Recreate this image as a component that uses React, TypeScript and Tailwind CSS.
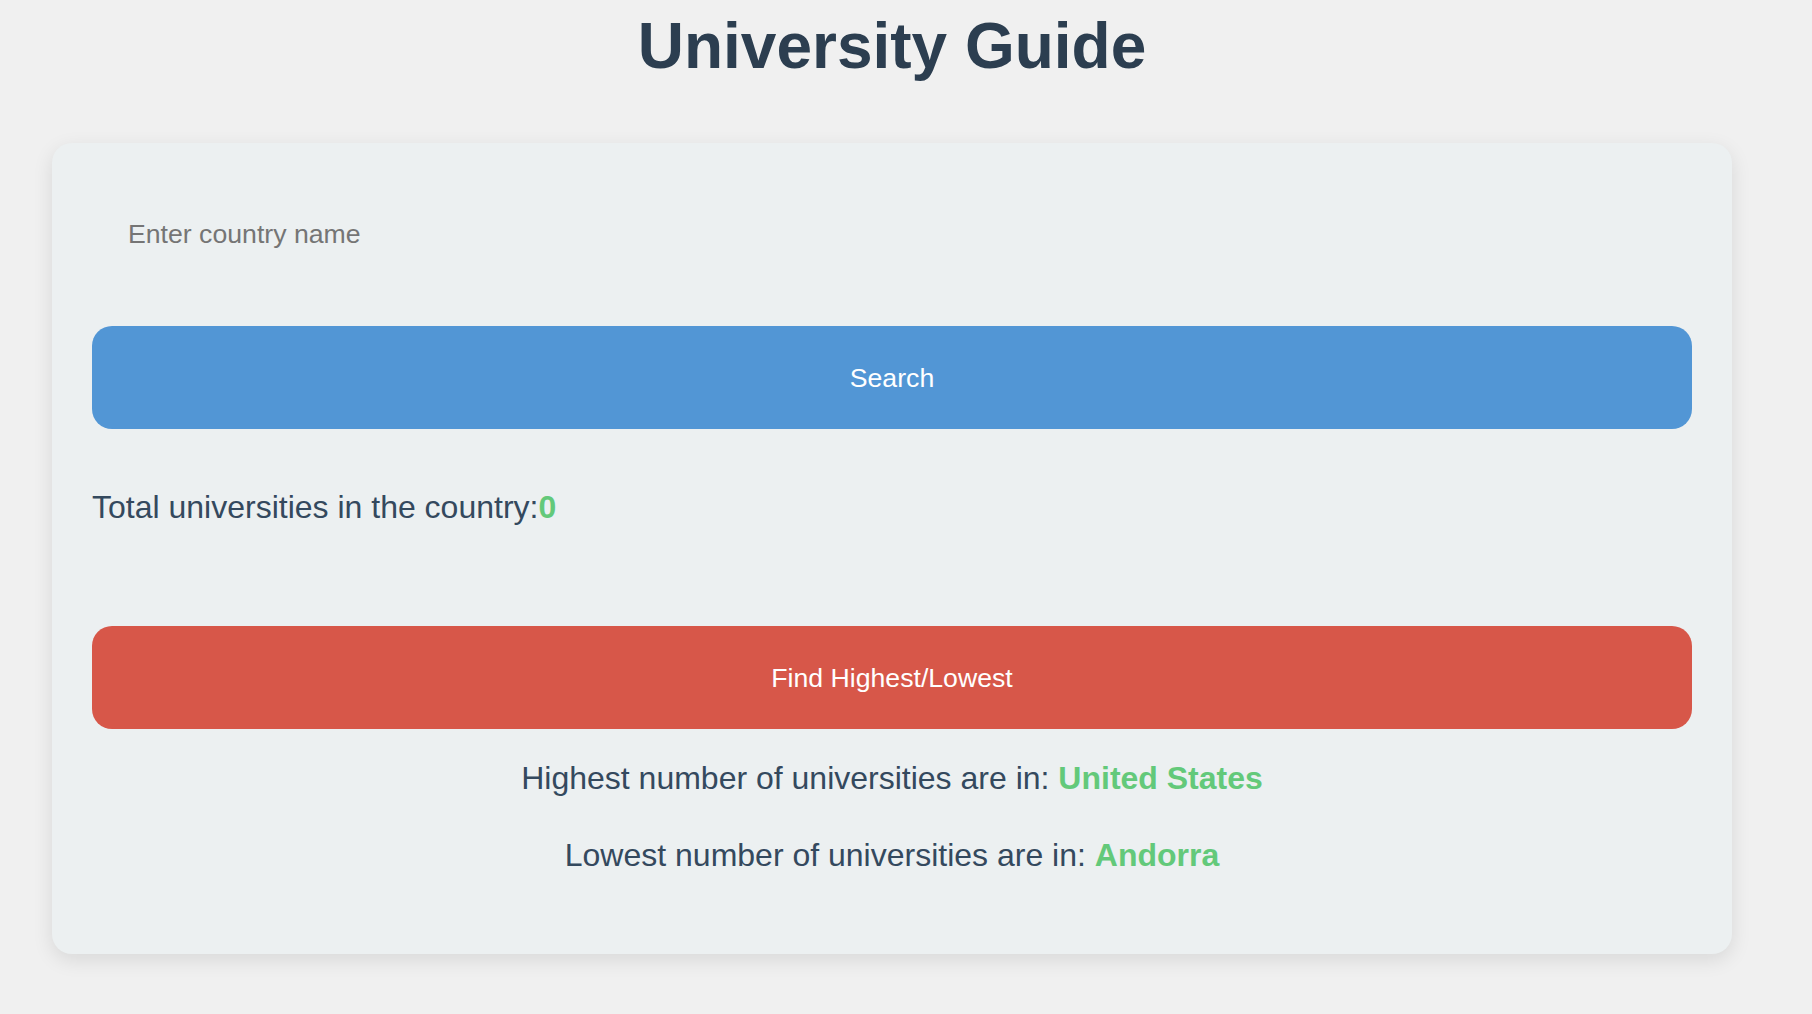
import { useState } from "react";

export default function App() {
  const [country, setCountry] = useState("");
  const [total] = useState(0);

  return (
    <div
      className="min-h-screen bg-[#f0f0f0] pl-[52px] pr-[80px] pb-10"
      style={{ fontFamily: '"Liberation Sans", Arial, sans-serif' }}
    >
      <h1 className="pt-[9px] text-center text-[64px] font-bold leading-[74px] text-[#2c3e50]">
        University Guide
      </h1>

      <div className="mt-[60px] rounded-[20px] bg-[#ecf0f1] p-10 pb-[80px] shadow-[0_6px_20px_rgba(0,0,0,0.1)]">
        <input
          value={country}
          onChange={(e) => setCountry(e.target.value)}
          placeholder="Enter country name"
          className="block w-full bg-transparent px-[36px] py-[36px] text-[26.67px] leading-[30px] text-[#2c3e50] outline-none placeholder:text-[#757575]"
        />

        <button className="mt-[41px] block h-[103px] w-full rounded-[20px] bg-[#5296d5] text-[26.67px] text-white">
          Search
        </button>

        <p className="mt-[60px] text-[32px] leading-[37px] text-[#34495e]">
          Total universities in the country:
          <span className="font-bold text-[#63c97a]">{total}</span>
        </p>

        <button className="mt-[100px] block h-[103px] w-full rounded-[20px] bg-[#d75749] text-[26.67px] text-white">
          Find Highest/Lowest
        </button>

        <div className="mt-[31px] flex flex-col gap-10 text-center text-[32px] leading-[37px] text-[#34495e]">
          <p>
            Highest number of universities are in:{" "}
            <span className="font-bold text-[#63c97a]">United States</span>
          </p>
          <p>
            Lowest number of universities are in:{" "}
            <span className="font-bold text-[#63c97a]">Andorra</span>
          </p>
        </div>
      </div>
    </div>
  );
}
